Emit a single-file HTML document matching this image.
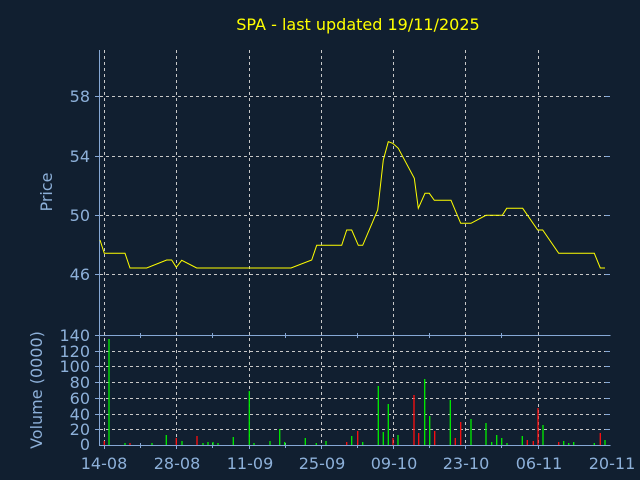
<!DOCTYPE html>
<html><head><style>
html,body{margin:0;padding:0;background:#111f30;}
svg{display:block}
text{font-family:"DejaVu Sans","Liberation Sans",sans-serif;fill:#8db0d9}
</style></head><body>
<svg width="640" height="480" viewBox="0 0 640 480" xmlns="http://www.w3.org/2000/svg">
<rect width="640" height="480" fill="#111f30"/>
<text x="358" y="30" text-anchor="middle" font-size="16" style="fill:#ffff00">SPA - last updated 19/11/2025</text>
<g stroke="#c8c8c8" stroke-width="1" stroke-dasharray="3,3" fill="none">
<path d="M104.5 50V445M176.5 50V445M249.5 50V445M321.5 50V445M393.5 50V445M465.5 50V445M538.5 50V445"/>
<path d="M100 96.5H610M100 156.5H610M100 215.5H610M100 274.5H610"/>
<path d="M100 351.5H610M100 366.5H610M100 382.5H610M100 398.5H610M100 414.5H610M100 429.5H610"/>
</g>
<g stroke="#86a8d6" stroke-width="1" fill="none">
<path d="M99.5 50V445.5H610.5"/>
<path d="M99.5 335.5H610.5"/>
<path d="M95 96.5h5M95 156.5h5M95 215.5h5M95 274.5h5M605 96.5h5M605 156.5h5M605 215.5h5M605 274.5h5"/>
<path d="M95 335.5h5M95 351.5h5M95 366.5h5M95 382.5h5M95 398.5h5M95 414.5h5M95 429.5h5M605 351.5h5M605 366.5h5M605 382.5h5M605 398.5h5M605 414.5h5M605 429.5h5"/>
<path d="M140.5 333v5M212.5 333v5M285.5 333v5M357.5 333v5M429.5 333v5M501.5 333v5M140.5 443v5M212.5 443v5M285.5 443v5M357.5 443v5M429.5 443v5M501.5 443v5M104.5 445v4M176.5 445v4M249.5 445v4M321.5 445v4M393.5 445v4M465.5 445v4M538.5 445v4"/>
</g>
<polyline fill="none" stroke="#ffff00" stroke-width="1" points="100,240 104.3,253.3 125,253.3 130,268 146.7,268 166.7,260 171.7,260 176.3,267.3 181.7,260.3 196.7,268 291,268 311.7,260 316.7,245.3 341.7,245.3 346.7,230 351.7,230 358.3,245.3 362.7,245.3 377.7,210 383.3,160 388.3,141.7 392.7,143.3 398.3,148.3 414.3,178.3 418.3,208.3 425,193.3 429.3,193.3 434.3,200.3 451,200.3 460.7,223.3 471,223.3 486,215.3 502.3,215.3 506.7,208.3 522.7,208.3 537.7,230 542.7,230 558.7,253.3 594.3,253.3 600.3,268 605,268"/>
<g stroke-width="1.3">
<g stroke="#00ee00">
<path d="M109 445V339M125 445V443M152 445V443M166.3 445V435M182 445V441M203 445V443M208 445V442M213 445V442M218 445V443M233.3 445V437M249.3 445V391M254 445V443M270 445V441M279.7 445V429M284.7 445V442M305.3 445V438M316.3 445V443M326 445V441M351.7 445V436M362.7 445V442M378.3 445V386M383.3 445V432M388.3 445V404M398 445V435M424.7 445V379M429.7 445V416M450.3 445V400M471 445V419M486 445V423M491.7 445V442M496.7 445V435M501.7 445V438M507 445V443M522.3 445V436M543 445V425M563.7 445V441M568.7 445V443M573.7 445V442M594.3 445V443M605 445V440"/>
</g>
<g stroke="#ff1010">
<path d="M104.3 445V441M130 445V443M176.3 445V438M197 445V436M346.7 445V442M357.7 445V431M393 445V438M414 445V395M418.7 445V433M434.7 445V431M455.3 445V438M460.7 445V422M527.3 445V440M533.3 445V441M538 445V408M558.7 445V442M600.3 445V433"/>
</g>
</g>
<g font-size="16" text-anchor="end">
<text x="90" y="102">58</text><text x="90" y="162">54</text><text x="90" y="221">50</text><text x="90" y="280">46</text>
<text x="90" y="341">140</text><text x="90" y="357">120</text><text x="90" y="372">100</text><text x="90" y="388">80</text><text x="90" y="404">60</text><text x="90" y="420">40</text><text x="90" y="435">20</text><text x="90" y="450">0</text>
</g>
<g font-size="16" text-anchor="middle">
<text x="104" y="469">14-08</text><text x="177" y="469">28-08</text><text x="250" y="469">11-09</text><text x="322" y="469">25-09</text><text x="394" y="469">09-10</text><text x="466" y="469">23-10</text><text x="539" y="469">06-11</text><text x="612" y="469">20-11</text>
</g>
<text transform="translate(52,192) rotate(-90)" font-size="16" text-anchor="middle">Price</text>
<text transform="translate(42,390) rotate(-90)" font-size="16" text-anchor="middle">Volume (0000)</text>
</svg>
</body></html>
